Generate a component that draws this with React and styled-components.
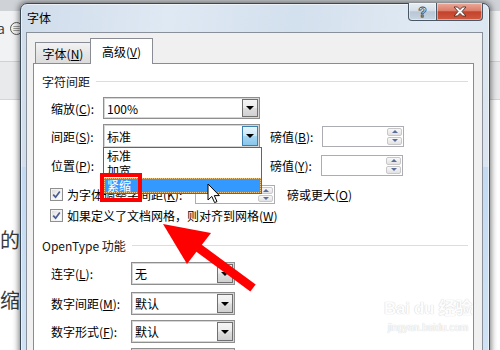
import React from "react";
import styled, { createGlobalStyle } from "styled-components";

const GlobalStyle = createGlobalStyle`
  html, body { margin: 0; padding: 0; }
  body {
    width: 500px;
    height: 350px;
    overflow: hidden;
    background: #fff;
    font-family: "Noto Sans CJK SC", "Noto Sans", sans-serif;
  }
`;

const Desktop = styled.div`
  position: relative;
  width: 500px;
  height: 350px;
  overflow: hidden;
`;

/* the Word window behind the dialog */
const WordWindow = styled.div`
  display: flex;
  flex-direction: column;
  height: 100%;
`;

const Ribbon = styled.div`
  height: 62px;
  box-sizing: border-box;
  padding-top: 20px;
  display: flex;
  align-items: flex-start;
  gap: 5px;
  background: linear-gradient(#cfd2d6 0 11px, #f1f2f3 11px);
  border-bottom: 1px solid #cfd1d4;
`;

const RibbonGlyph = styled.span`
  font-size: 14px;
  line-height: 16px;
  margin-left: -3px;
  color: #444;
`;

const RibbonIcon = styled.span`
  width: 11px;
  height: 11px;
  border: 1px solid #555;
  border-radius: 50%;
  margin-top: 2px;
  display: flex;
  align-items: center;
  justify-content: center;
  font-size: 9px;
  line-height: 9px;
  color: #555;
`;

const Ruler = styled.div`
  height: 37px;
  background: #e9eaec;
  border-bottom: 1px solid #d3d5d8;
`;

const DocPage = styled.div`
  flex: 1;
  background: #fff;
`;

const DocText = styled.div`
  width: 19px;
  padding-top: 110px;
  font-size: 20px;
  line-height: 60px;
  color: #3a3a3a;
  text-align: right;
  overflow: hidden;
  white-space: nowrap;
`;

/* the dialog window */
const Dialog = styled.div`
  position: absolute;
  left: 20px;
  top: 3px;
  width: 470px;
  height: 372px;
  box-sizing: border-box;
  border: 1px solid #3b4856;
  border-radius: 7px 7px 0 0;
  background:
    linear-gradient(to bottom, transparent 0 163px, #c3daf1 163px, #d2e4f6),
    linear-gradient(100deg, #cfdcea 0%, #dfe9f4 28%, #d3e0ed 52%, #e1eaf4 78%, #d6e2ee 100%);
  box-shadow: 0 0 6px 1px rgba(0, 0, 0, 0.55), inset 0 0 0 1px rgba(255, 255, 255, 0.55);
  display: flex;
  flex-direction: column;
`;

const TitleBar = styled.div`
  height: 28px;
  flex: none;
  display: flex;
  align-items: flex-start;
  padding-left: 6px;
`;

const Title = styled.span`
  font-size: 12px;
  line-height: 28px;
  color: #000;
`;

const Controls = styled.div`
  margin-left: auto;
  margin-right: 6px;
  margin-top: -1px;
  display: flex;
`;

const CaptionButton = styled.div`
  width: ${p => p.$w}px;
  height: 18px;
  box-sizing: border-box;
  border: 1px solid #4a5663;
  border-top: none;
  border-left-width: ${p => (p.$close ? 0 : 1)}px;
  border-radius: ${p => (p.$close ? "0 0 4px 0" : "0 0 0 4px")};
  background: ${p =>
    p.$close
      ? "linear-gradient(#ebab9d, #dc7d69 45%, #c4422b 52%, #cf5a3f)"
      : "linear-gradient(#e7edf4, #d5dee8 45%, #b8c6d5 52%, #c8d5e2)"};
  box-shadow: inset 0 0 0 1px rgba(255, 255, 255, 0.45);
  display: flex;
  align-items: center;
  justify-content: center;
`;

const HelpMark = styled.span`
  font-family: "Liberation Sans", sans-serif;
  font-weight: bold;
  font-size: 14px;
  line-height: 14px;
  color: #f4f6f8;
  -webkit-text-stroke: 0.8px #3c4550;
`;

const Client = styled.div`
  flex: 1;
  margin: 0 6px 0 5px;
  border: 1px solid #8a9099;
  background: #f0f0f0;
  padding: 6px 8px 0 6px;
  display: flex;
  flex-direction: column;
`;

const TabBar = styled.div`
  display: flex;
  align-items: flex-end;
  padding-left: 2px;
  height: 25px;
  position: relative;
  z-index: 1;
  margin-bottom: -1px;
`;

const Tab = styled.div`
  width: ${p => p.$w}px;
  height: ${p => (p.$active ? 26 : 22)}px;
  box-sizing: border-box;
  border: 1px solid #898c95;
  border-bottom: ${p => (p.$active ? "none" : "1px solid #898c95")};
  margin-left: ${p => (p.$active ? -1 : 0)}px;
  background: ${p => (p.$active ? "#fff" : "linear-gradient(#f3f3f3, #e6e6e6 50%, #dcdcdc)")};
  display: flex;
  align-items: center;
  justify-content: center;
  font-size: 12px;
  color: #000;
`;

const Panel = styled.div`
  flex: 1;
  border: 1px solid #898c95;
  background: #fff;
  padding: 0 5px 0 8px;
`;

const Group = styled.div`
  display: flex;
  align-items: center;
  height: 14px;
  margin-top: ${p => p.$mt}px;
  font-size: 12px;
  color: #151515;
  &::after {
    content: "";
    flex: 1;
    height: 1px;
    background: #d5dfe5;
    margin-left: 6px;
  }
`;

const Rows = styled.div`
  padding-left: 9px;
`;

const Row = styled.div`
  display: flex;
  align-items: center;
  height: ${p => p.$h || 22}px;
  margin-top: ${p => p.$mt || 0}px;
`;

const Label = styled.span`
  width: ${p => p.$w}px;
  flex: none;
  font-size: 12px;
  color: #000;
  white-space: nowrap;
  margin-left: ${p => p.$ml || 0}px;
`;

const Key = styled.span`
  text-decoration: underline;
`;

const Combo = styled.div`
  position: relative;
  width: ${p => p.$w}px;
  height: ${p => p.$h || 22}px;
  box-sizing: border-box;
  flex: none;
  border: 1px solid #8f8f8f;
  box-shadow: inset 0 0 0 1px #d6d6d6;
  background: #fff;
  padding: 1px;
  display: flex;
`;

const ComboValue = styled.span`
  flex: 1;
  display: flex;
  align-items: center;
  padding-left: 2px;
  font-size: 12px;
  color: #000;
`;

const DropButton = styled.span`
  width: 16px;
  flex: none;
  box-sizing: border-box;
  border: 1px solid ${p => (p.$hot ? "#3c7fb1" : "#707070")};
  background: ${p =>
    p.$hot
      ? "linear-gradient(#e8f5fc, #c9e7f8 48%, #a6d6f2 52%, #89c5ea)"
      : "linear-gradient(#f5f5f5, #ececec 48%, #dedede 52%, #d0d0d0)"};
  display: flex;
  align-items: center;
  justify-content: center;
  &::after {
    content: "";
    border-left: 4px solid transparent;
    border-right: 4px solid transparent;
    border-top: 4px solid #000;
  }
`;

const DropList = styled.div`
  position: absolute;
  left: -1px;
  top: 100%;
  width: 159px;
  box-sizing: border-box;
  border: 1px solid #646464;
  background: #fff;
  z-index: 3;
`;

const DropItem = styled.div`
  height: 15px;
  box-sizing: border-box;
  padding-left: 2px;
  font-size: 12px;
  line-height: 14px;
  color: ${p => (p.$sel ? "#fff" : "#000")};
  background: ${p => (p.$sel ? "#3399ff" : "transparent")};
  border: 1px dotted ${p => (p.$sel ? "#f2c47a" : "transparent")};
`;

const Spin = styled.div`
  width: ${p => p.$w}px;
  height: ${p => p.$h || 21}px;
  box-sizing: border-box;
  flex: none;
  border: 1px solid #abadb3;
  background: #fff;
  padding: 1px;
  display: flex;
  justify-content: flex-end;
  margin-left: ${p => p.$ml || 0}px;
`;

const SpinButtons = styled.div`
  width: 15px;
  display: flex;
  flex-direction: column;
  gap: 1px;
`;

const SpinHalf = styled.span`
  flex: 1;
  box-sizing: border-box;
  border: 1px solid #c8c8c8;
  border-radius: 2px;
  background: linear-gradient(#f8f8f8, #e2e2e2);
  display: flex;
  align-items: center;
  justify-content: center;
  &::after {
    content: "";
    border-left: 3px solid transparent;
    border-right: 3px solid transparent;
    ${p => (p.$down ? "border-top: 3px solid #5a6c9c;" : "border-bottom: 3px solid #5a6c9c;")}
  }
`;

const CheckBox = styled.span`
  width: 13px;
  height: 13px;
  box-sizing: border-box;
  flex: none;
  margin-left: -1px;
  margin-right: 4px;
  border: 1px solid #8e8f8f;
  background: linear-gradient(135deg, #d8d8d8, #f7f7f7 60%, #fff);
  box-shadow: inset 0 0 0 1px #f4f4f4;
  display: flex;
  align-items: center;
  justify-content: center;
`;

const CheckText = styled.span`
  font-size: 12px;
  color: #000;
  white-space: nowrap;
  width: ${p => (p.$w ? `${p.$w}px` : "auto")};
  flex: none;
  overflow: hidden;
`;

/* overlays: annotation, cursor, watermark */
const RedBox = styled.div`
  position: absolute;
  left: 100px;
  top: 173px;
  width: 42px;
  height: 29px;
  box-sizing: border-box;
  border: 4px solid #ff0000;
  z-index: 10;
`;

const Overlay = styled.svg`
  position: absolute;
  left: 0;
  top: 0;
  z-index: 11;
  pointer-events: none;
`;

const Watermark = styled.div`
  position: absolute;
  left: 383px;
  top: 296px;
  width: 90px;
  z-index: 9;
  display: flex;
  flex-direction: column;
  align-items: center;
  color: #fdfdfd;
  text-shadow: 0 0 1px #d2d2d2, 0 0 1px #dadada;
  font-family: "Liberation Sans", "Noto Sans CJK SC", sans-serif;
`;

const WatermarkLogo = styled.span`
  font-size: 17px;
  font-weight: bold;
  line-height: 26px;
  white-space: nowrap;
  letter-spacing: -0.3px;
`;

const WatermarkUrl = styled.span`
  font-size: 10px;
  line-height: 12px;
  white-space: nowrap;
`;

function Check() {
  return (
    <CheckBox>
      <svg width="9" height="9" viewBox="0 0 9 9">
        <path d="M1.2 4.6 L3.6 7.2 L7.8 1.4" fill="none" stroke="#4a5d95" strokeWidth="1.7" />
      </svg>
    </CheckBox>
  );
}

function SpinBox(props) {
  return (
    <Spin {...props}>
      <SpinButtons>
        <SpinHalf />
        <SpinHalf $down />
      </SpinButtons>
    </Spin>
  );
}

function ComboBox({ value, hot, children, ...rest }) {
  return (
    <Combo {...rest}>
      <ComboValue>{value}</ComboValue>
      <DropButton $hot={hot} />
      {children}
    </Combo>
  );
}

export default function App() {
  return (
    <>
      <GlobalStyle />
      <Desktop>
        <WordWindow>
          <Ribbon>
            <RibbonGlyph>a</RibbonGlyph>
            <RibbonIcon>≡</RibbonIcon>
          </Ribbon>
          <Ruler />
          <DocPage>
            <DocText>
              的<br />缩
            </DocText>
          </DocPage>
        </WordWindow>

        <Dialog>
          <TitleBar>
            <Title>字体</Title>
            <Controls>
              <CaptionButton $w={29}>
                <HelpMark>?</HelpMark>
              </CaptionButton>
              <CaptionButton $w={46} $close>
                <svg width="14" height="11" viewBox="0 0 14 11">
                  <path
                    d="M1 1 H4.5 L7 3.6 L9.5 1 H13 L9 5.5 L13 10 H9.5 L7 7.4 L4.5 10 H1 L5 5.5 Z"
                    fill="#fafafa"
                    stroke="#45302c"
                    strokeWidth="0.9"
                  />
                </svg>
              </CaptionButton>
            </Controls>
          </TitleBar>

          <Client>
            <TabBar>
              <Tab $w={56}>
                字体(<Key>N</Key>)
              </Tab>
              <Tab $w={63} $active>
                高级(<Key>V</Key>)
              </Tab>
            </TabBar>

            <Panel>
              <Group $mt={10}>字符间距</Group>
              <Rows>
                <Row $mt={9}>
                  <Label $w={52}>
                    缩放(<Key>C</Key>):
                  </Label>
                  <ComboBox $w={157} value="100%" />
                </Row>

                <Row $mt={5} $h={24}>
                  <Label $w={52}>
                    间距(<Key>S</Key>):
                  </Label>
                  <ComboBox $w={157} $h={24} value="标准" hot>
                    <DropList>
                      <DropItem>标准</DropItem>
                      <DropItem>加宽</DropItem>
                      <DropItem $sel>紧缩</DropItem>
                    </DropList>
                  </ComboBox>
                  <Label $w={52} $ml={10}>
                    磅值(<Key>B</Key>):
                  </Label>
                  <SpinBox $w={82} />
                </Row>

                <Row $mt={6}>
                  <Label $w={52}>
                    位置(<Key>P</Key>):
                  </Label>
                  <ComboBox $w={157} value="标准" />
                  <Label $w={51} $ml={10}>
                    磅值(<Key>Y</Key>):
                  </Label>
                  <SpinBox $w={82} />
                </Row>

                <Row $mt={7}>
                  <Check />
                  <CheckText $w={128}>
                    为字体调整字间距(<Key>K</Key>):
                  </CheckText>
                  <SpinBox $w={80} $h={19} />
                  <Label $w={90} $ml={12}>
                    磅或更大(<Key>O</Key>)
                  </Label>
                </Row>

                <Row $h={20}>
                  <Check />
                  <CheckText>
                    如果定义了文档网格，则对齐到网格(<Key>W</Key>)
                  </CheckText>
                </Row>
              </Rows>

              <Group $mt={13}>OpenType 功能</Group>
              <Rows>
                <Row $mt={10} $h={23}>
                  <Label $w={80}>
                    连字(<Key>L</Key>):
                  </Label>
                  <ComboBox $w={104} $h={23} value="无" />
                </Row>
                <Row $mt={7} $h={23}>
                  <Label $w={80}>
                    数字间距(<Key>M</Key>):
                  </Label>
                  <ComboBox $w={104} $h={23} value="默认" />
                </Row>
                <Row $mt={5} $h={23}>
                  <Label $w={80}>
                    数字形式(<Key>F</Key>):
                  </Label>
                  <ComboBox $w={104} $h={23} value="默认" />
                </Row>
                <Row $mt={5} $h={23}>
                  <Label $w={80} />
                  <ComboBox $w={104} $h={23} value="" />
                </Row>
              </Rows>
            </Panel>
          </Client>
        </Dialog>

        <RedBox />

        <Watermark>
          <WatermarkLogo>Bai du 经验</WatermarkLogo>
          <WatermarkUrl>jingyan.baidu.com</WatermarkUrl>
        </Watermark>

        <Overlay width="500" height="350" viewBox="0 0 500 350">
          {/* red annotation arrow */}
          <line x1="196" y1="246" x2="253" y2="288" stroke="#ff0000" strokeWidth="9" />
          <polygon points="163,224 211,233 187,264" fill="#ff0000" />
          {/* mouse pointer */}
          <path
            d="M208 184 L208 200 L211.8 196.4 L214.6 202.6 L217 201.6 L214.3 195.6 L219.4 195.6 Z"
            fill="#fff"
            stroke="#000"
            strokeWidth="1"
            strokeLinejoin="round"
          />
        </Overlay>
      </Desktop>
    </>
  );
}
